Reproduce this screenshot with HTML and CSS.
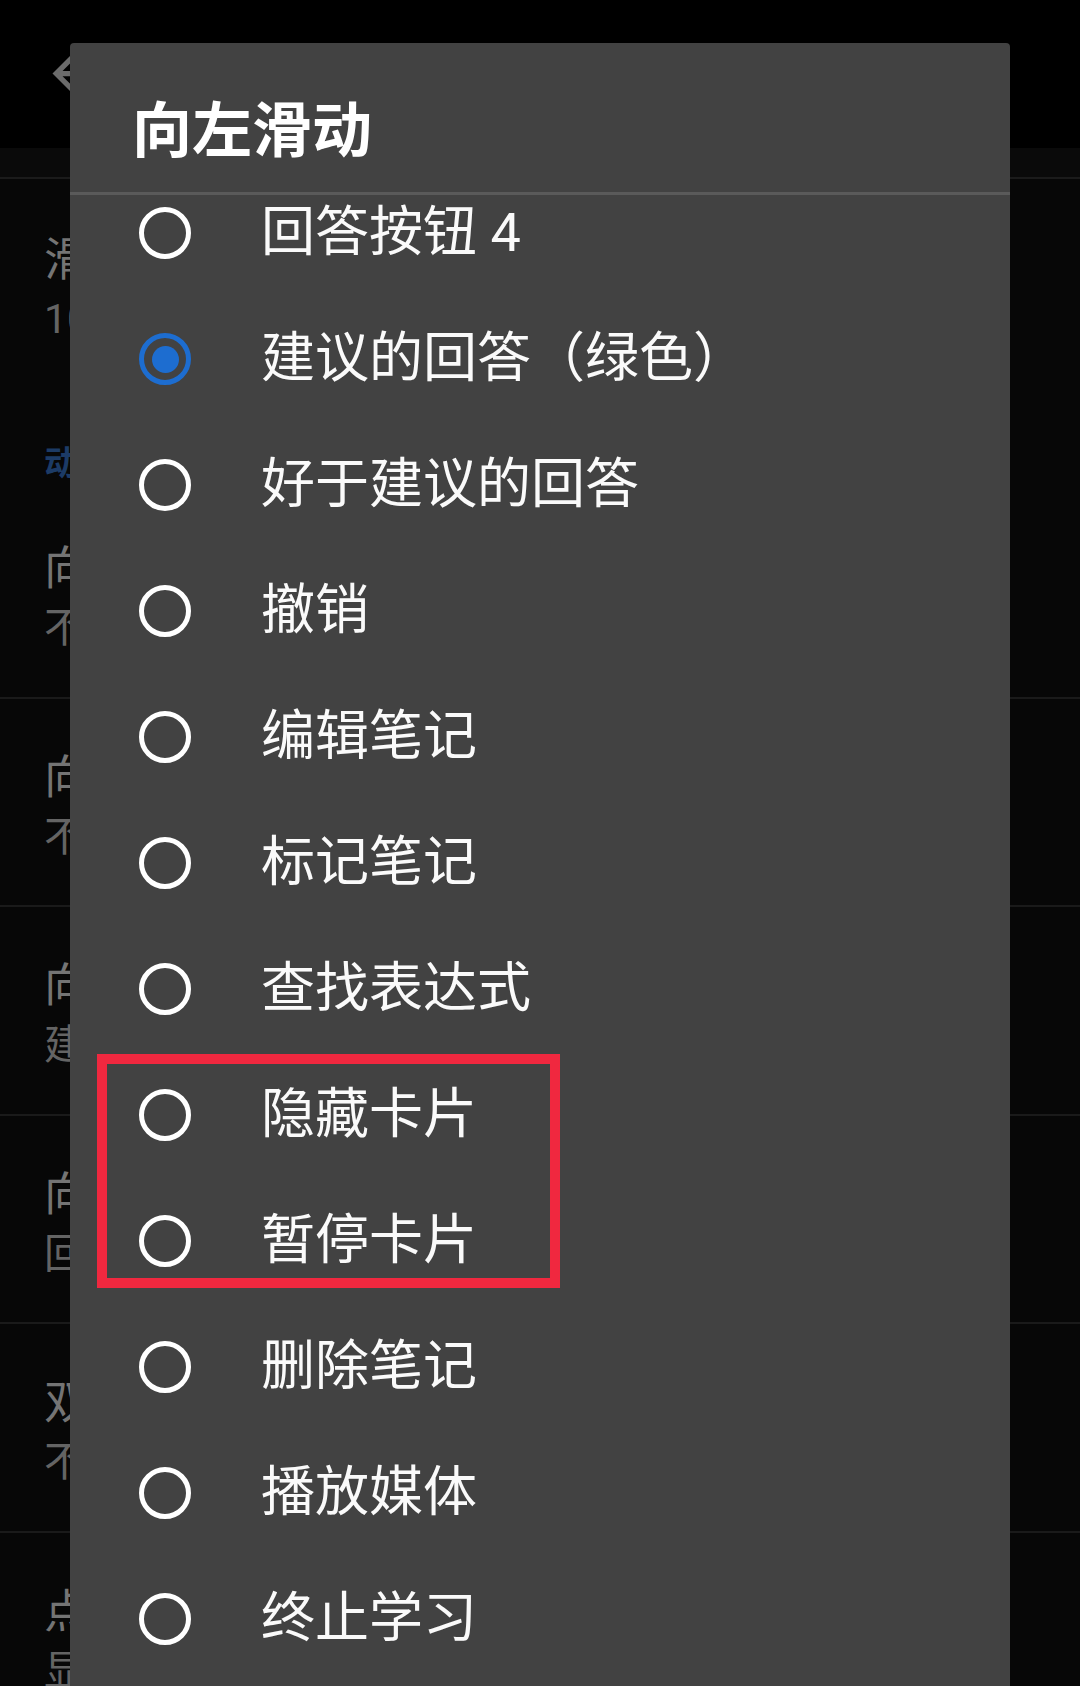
FILE: index.html
```html
<!DOCTYPE html>
<html lang="zh-CN">
<head>
<meta charset="utf-8">
<title>向左滑动</title>
<link rel="stylesheet" href="styles.css">
</head>
<body>
<div class="page">
  <header class="toolbar">
    <svg class="back" viewBox="0 0 24 24" width="63" height="63"><path d="M20 11H7.83l5.59-5.59L12 4l-8 8 8 8 1.41-1.41L7.83 13H20v-2z"/></svg>
  </header>
  <div class="band"></div>
  <ul class="prefs">
    <li class="pref first"><span class="pt">滑动灵敏度</span><span class="ps">100</span></li>
    <li class="cat">动作</li>
    <li class="pref"><span class="pt">向上滑动</span><span class="ps">不执行任何操作</span></li>
    <li class="pref"><span class="pt">向下滑动</span><span class="ps">不执行任何操作</span></li>
    <li class="pref"><span class="pt">向左滑动</span><span class="ps">建议的回答（绿色）</span></li>
    <li class="pref"><span class="pt">向右滑动</span><span class="ps">回答按钮 1</span></li>
    <li class="pref"><span class="pt">双击</span><span class="ps">不执行任何操作</span></li>
    <li class="pref"><span class="pt">点击顶部</span><span class="ps">显示答案</span></li>
  </ul>
</div>

<div class="dialog">
  <h1 class="title">向左滑动</h1>
  <div class="divider"></div>
  <div class="options">
    <div class="option first"><span class="radio"></span><span class="label">回答按钮 4</span></div>
    <div class="option"><span class="radio checked"></span><span class="label">建议的回答（绿色）</span></div>
    <div class="option"><span class="radio"></span><span class="label">好于建议的回答</span></div>
    <div class="option"><span class="radio"></span><span class="label">撤销</span></div>
    <div class="option"><span class="radio"></span><span class="label">编辑笔记</span></div>
    <div class="option"><span class="radio"></span><span class="label">标记笔记</span></div>
    <div class="option"><span class="radio"></span><span class="label">查找表达式</span></div>
    <div class="option"><span class="radio"></span><span class="label">隐藏卡片</span></div>
    <div class="option"><span class="radio"></span><span class="label">暂停卡片</span></div>
    <div class="option"><span class="radio"></span><span class="label">删除笔记</span></div>
    <div class="option"><span class="radio"></span><span class="label">播放媒体</span></div>
    <div class="option"><span class="radio"></span><span class="label">终止学习</span></div>
    <div class="option"><span class="radio"></span><span class="label">切换白板</span></div>
  </div>
</div>

<div class="highlight"></div>
</body>
</html>
```

FILE: styles.css
```css
html, body {
  margin: 0;
  padding: 0;
}
body {
  width: 1080px;
  height: 1686px;
  overflow: hidden;
  position: relative;
  background: #070707;
  font-family: Roboto, "Noto Sans CJK SC", sans-serif;
}
.page {
  display: flex;
  flex-direction: column;
}
.toolbar {
  height: 148px;
  background: #000;
  position: relative;
}
.back {
  position: absolute;
  left: 42px;
  top: 42px;
  fill: #6b6b6b;
}
.band {
  height: 29px;
  background: #0a0a0a;
  border-bottom: 2px solid #1b1b1b;
}
.prefs {
  list-style: none;
  margin: 0;
  padding: 0;
}
.pref {
  display: flex;
  flex-direction: column;
  height: 208.5px;
  box-sizing: border-box;
  padding: 48px 0 0 44px;
  border-bottom: 2px solid #1a1a1a;
}
.pref.first {
  height: 204px;
  padding-top: 50px;
  border-bottom: none;
}
.pt {
  font-size: 46px;
  line-height: 60px;
  color: #747474;
  white-space: nowrap;
}
.ps {
  font-size: 41px;
  line-height: 60px;
  color: #646464;
  white-space: nowrap;
}
.cat {
  height: 107px;
  box-sizing: border-box;
  padding: 55px 0 0 44px;
  font-size: 34px;
  line-height: 50px;
  font-weight: 700;
  color: #1c3b66;
}

.dialog {
  position: absolute;
  left: 70px;
  top: 43px;
  width: 940px;
  height: 1700px;
  background: #424242;
  border-radius: 4px 4px 0 0;
  overflow: hidden;
  display: flex;
  flex-direction: column;
}
.title {
  margin: 0;
  padding: 59px 0 30px 62px;
  font-size: 60px;
  line-height: 60px;
  font-weight: 700;
  color: #ffffff;
}
.divider {
  height: 3px;
  background: #5a5a5a;
}
.options {
  flex: 1;
  overflow: hidden;
}
.option {
  display: flex;
  align-items: center;
  height: 126px;
  padding-left: 69px;
}
.option.first {
  margin-top: -25px;
}
.radio {
  width: 52px;
  height: 52px;
  box-sizing: border-box;
  border: 5px solid #ffffff;
  border-radius: 50%;
  flex: none;
  display: flex;
  align-items: center;
  justify-content: center;
}
.radio.checked {
  border-color: #1d6dd0;
}
.radio.checked::after {
  content: "";
  width: 27px;
  height: 27px;
  border-radius: 50%;
  background: #1d6dd0;
}
.label {
  margin-left: 70px;
  font-size: 54px;
  line-height: 70px;
  color: #fafafa;
  white-space: nowrap;
}

.highlight {
  position: absolute;
  left: 97px;
  top: 1054px;
  width: 463px;
  height: 234px;
  box-sizing: border-box;
  border: 10px solid #f0283f;
}
```
